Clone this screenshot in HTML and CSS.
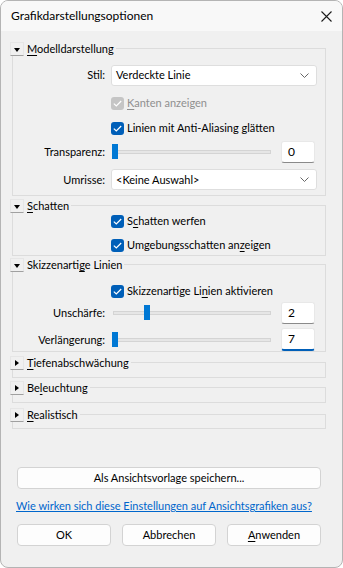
FILE: index.html
```html
<!doctype html>
<html>
<head>
<title>Grafikdarstellungsoptionen</title>
<link rel="stylesheet" href="styles.css">
</head>
<body>
<div class="window">
  <div class="titlebar">
    <span class="title">Grafikdarstellungsoptionen</span>
    <svg class="close" width="11" height="11" viewBox="0 0 11 11"><path d="M0.5 0.5L10.5 10.5M10.5 0.5L0.5 10.5" stroke="#1b1b1b" stroke-width="1.1" fill="none"/></svg>
  </div>
  <div class="content">

    <!-- Modelldarstellung -->
    <div class="group">
      <div class="group-head"><span class="toggle open"></span><span class="group-title"><u>M</u>odelldarstellung</span></div>
      <div class="group-body model">
        <div class="row">
          <span class="lbl">Stil:</span>
          <div class="select">Verdeckte Linie<svg width="9" height="5" viewBox="0 0 9 5"><path d="M0.5 0.5L4.5 4.5L8.5 0.5" stroke="#666" fill="none"/></svg></div>
        </div>
        <div class="row check-row r-kanten">
          <div class="check disabled"><span class="box"><svg width="9" height="7" viewBox="0 0 9 7"><path d="M0.8 3.6L3.3 6L8.2 1" stroke="#fff" stroke-width="1.2" fill="none"/></svg></span><span><u>K</u>anten anzeigen</span></div>
        </div>
        <div class="row check-row r-linien">
          <div class="check"><span class="box"><svg width="9" height="7" viewBox="0 0 9 7"><path d="M0.8 3.6L3.3 6L8.2 1" stroke="#fff" stroke-width="1.2" fill="none"/></svg></span><span>Linien mit Ant<u>i</u>-Aliasing glätten</span></div>
        </div>
        <div class="row r-transp">
          <span class="lbl">Transparenz:</span>
          <div class="slider-line">
            <div class="slider"><span class="track"></span><span class="thumb" style="left:0%"></span></div>
            <div class="textbox">0</div>
          </div>
        </div>
        <div class="row r-umrisse">
          <span class="lbl">Umrisse:</span>
          <div class="select">&lt;Keine Auswahl&gt;<svg width="9" height="5" viewBox="0 0 9 5"><path d="M0.5 0.5L4.5 4.5L8.5 0.5" stroke="#666" fill="none"/></svg></div>
        </div>
      </div>
    </div>

    <!-- Schatten -->
    <div class="group g-schatten">
      <div class="group-head"><span class="toggle open"></span><span class="group-title"><u>S</u>chatten</span></div>
      <div class="group-body shadow">
        <div class="row check-row r-werfen">
          <div class="check"><span class="box"><svg width="9" height="7" viewBox="0 0 9 7"><path d="M0.8 3.6L3.3 6L8.2 1" stroke="#fff" stroke-width="1.2" fill="none"/></svg></span><span>S<u>c</u>hatten werfen</span></div>
        </div>
        <div class="row check-row r-umgebung">
          <div class="check"><span class="box"><svg width="9" height="7" viewBox="0 0 9 7"><path d="M0.8 3.6L3.3 6L8.2 1" stroke="#fff" stroke-width="1.2" fill="none"/></svg></span><span>Umgebungsschatten an<u>z</u>eigen</span></div>
        </div>
      </div>
    </div>

    <!-- Skizzenartige Linien -->
    <div class="group g-skizze">
      <div class="group-head"><span class="toggle open"></span><span class="group-title">Skizzenarti<u>g</u>e Linien</span></div>
      <div class="group-body sketch">
        <div class="row check-row r-aktiv">
          <div class="check"><span class="box"><svg width="9" height="7" viewBox="0 0 9 7"><path d="M0.8 3.6L3.3 6L8.2 1" stroke="#fff" stroke-width="1.2" fill="none"/></svg></span><span>Skizzenartige Li<u>n</u>ien aktivieren</span></div>
        </div>
        <div class="row r-unschaerfe">
          <span class="lbl">Unschärfe:</span>
          <div class="slider-line">
            <div class="slider"><span class="track"></span><span class="thumb" style="left:20%"></span></div>
            <div class="textbox">2</div>
          </div>
        </div>
        <div class="row r-verl">
          <span class="lbl">Verlängerung:</span>
          <div class="slider-line">
            <div class="slider"><span class="track"></span><span class="thumb" style="left:0%"></span></div>
            <div class="textbox focused">7</div>
          </div>
        </div>
      </div>
    </div>

    <!-- collapsed -->
    <div class="group collapsed g-tiefe">
      <div class="group-head"><span class="toggle"></span><span class="group-title"><u>T</u>iefenabschwächung</span></div>
    </div>
    <div class="group collapsed">
      <div class="group-head"><span class="toggle"></span><span class="group-title">Be<u>l</u>euchtung</span></div>
    </div>
    <div class="group collapsed g-real">
      <div class="group-head"><span class="toggle"></span><span class="group-title"><u>R</u>ealistisch</span></div>
    </div>

    <div class="footer">
      <div class="btn wide">Als Ansichtsvorlage speichern...</div>
      <a class="link" href="#">Wie wirken sich diese Einstellungen auf Ansichtsgrafiken aus?</a>
      <div class="buttons">
        <div class="btn">OK</div>
        <div class="btn">Abbrechen</div>
        <div class="btn"><u>A</u>nwenden</div>
      </div>
    </div>
  </div>
</div>
</body>
</html>
```

FILE: styles.css
```css
html, body {
  margin: 0;
  padding: 0;
}
body {
  font-family: "Segoe UI", Lato, "Noto Sans", sans-serif;
  font-size: 11px;
  line-height: 16px;
  color: #000;
  background: #ffffff;
}
u { text-underline-offset: 2px; }

.window {
  width: 343px;
  height: 568px;
  box-sizing: border-box;
  border: 1px solid #b4b4b4;
  border-radius: 8px;
  background: #f0f0f0;
  overflow: hidden;
  display: flex;
  flex-direction: column;
}
.titlebar {
  height: 30px;
  flex: none;
  background: #f8f8f8;
  display: flex;
  align-items: center;
  justify-content: space-between;
  padding: 0 10px 0 10px;
}
.title { font-size: 12px; }
.close { margin-top: 1px; }

.content {
  flex: 1;
  display: flex;
  flex-direction: column;
  padding: 17px 0 21px 11px;
}

/* group boxes */
.group {
  width: 314px;
  box-sizing: border-box;
  border: 1px solid #dcdcdc;
}
.g-schatten { margin-top: 9px; }
.g-skizze { margin-top: 8px; }
.collapsed { margin-top: 9px; height: 16px; }
.g-tiefe { margin-top: 10px; }
.g-real { margin-top: 11px; height: 15px; }

.group-head {
  display: flex;
  align-items: center;
  width: fit-content;
  height: 14px;
  margin: -7px 0 0 -3px;
  padding-right: 2px;
  background: #f0f0f0;
}
.toggle {
  width: 14px;
  height: 14px;
  box-sizing: border-box;
  border: 1px solid #e6e6e6;
  border-bottom-color: #a0a0a0;
  display: flex;
  align-items: center;
  justify-content: center;
  margin-right: 3px;
}
.toggle::before {
  content: "";
  border-left: 4px solid #000;
  border-top: 3.5px solid transparent;
  border-bottom: 3.5px solid transparent;
}
.toggle.open::before {
  border-top: 4px solid #000;
  border-left: 3.5px solid transparent;
  border-right: 3.5px solid transparent;
  border-bottom: 0;
  margin-top: 1px;
}
.group-title { line-height: 14px; }

.group-body { padding: 0 8px 0 0; }
.model { padding-top: 8px; padding-bottom: 5px; }
.shadow { margin-top: -2px; padding-bottom: 0; }
.sketch { padding-top: 9px; padding-bottom: 1px; }

.row {
  display: grid;
  grid-template-columns: 92px 1fr;
  column-gap: 6px;
  align-items: center;
  height: 22px;
}
.check-row { height: 20px; }
.lbl { text-align: right; }
.check-row .check { grid-column: 2; }
.r-kanten { margin-top: 7px; }
.r-linien { margin-top: 5px; }
.r-transp { margin-top: 3px; }
.r-umrisse { margin-top: 6px; height: 21px; }
.r-umgebung { margin-top: 4px; }
.r-unschaerfe { margin-top: 1px; }
.r-verl { margin-top: 4px; }

/* controls */
.select {
  height: 21px;
  box-sizing: border-box;
  background: #fff;
  border: 1px solid #dedede;
  border-radius: 3px;
  display: flex;
  align-items: center;
  justify-content: space-between;
  padding: 0 7px 0 4px;
}
.check {
  display: flex;
  align-items: center;
}
.check .box {
  width: 13px;
  height: 13px;
  border-radius: 3px;
  background: #005fb8;
  display: flex;
  align-items: center;
  justify-content: center;
  margin-right: 3px;
}
.check.disabled { color: #8f8f8f; }
.check.disabled .box { background: #c5c5c5; }

.slider-line {
  display: flex;
  align-items: center;
  gap: 9px;
  padding-right: 2px;
}
.slider {
  flex: 1;
  position: relative;
  height: 16px;
  display: flex;
  align-items: center;
}
.track {
  flex: 1;
  height: 2px;
  margin: 0 1px 0 2px;
  background: #e6e6e6;
  border: 1px solid #d4d4d4;
}
.thumb {
  position: absolute;
  top: 0;
  margin-left: 1px;
  width: 6px;
  height: 15px;
  background: #0078d4;
}
.textbox {
  width: 34px;
  height: 22px;
  box-sizing: border-box;
  background: #fff;
  border: 1px solid #e8e8e8;
  border-bottom: 1px solid #8a8a8a;
  border-radius: 3px;
  padding-left: 6px;
  font-size: 12px;
  line-height: 20px;
}
.textbox.focused {
  height: 23px;
  border-bottom: 2px solid #005fb8;
}

/* footer */
.footer {
  margin-top: auto;
  padding-left: 5px;
}
.btn {
  width: 94px;
  height: 22px;
  box-sizing: border-box;
  background: #fdfdfd;
  border: 1px solid #d3d3d3;
  border-radius: 4px;
  text-align: center;
  line-height: 20px;
}
.btn.wide { width: 304px; }
.link {
  display: block;
  margin: 9px 0 0 -1px;
  color: #0066cc;
  text-decoration: underline;
  white-space: nowrap;
}
.buttons {
  display: flex;
  gap: 11px;
  margin-top: 10px;
}
```
